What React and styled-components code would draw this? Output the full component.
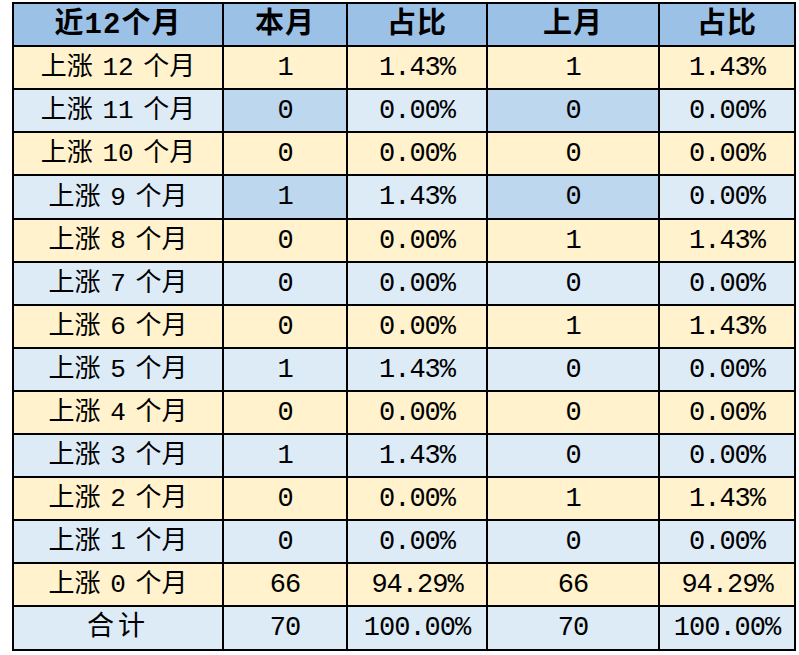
import React from "react";
import styled, { createGlobalStyle } from "styled-components";

const Global = createGlobalStyle`
  html, body { margin: 0; padding: 0; background: #ffffff; }
  body { padding: 2px 0 0 12px; }
`;

const Grid = styled.div`
  display: grid;
  grid-template-columns: 210px 124px 140px 172px 136px;
  width: max-content;
  border-top: 2px solid #000;
  border-left: 2px solid #000;
  font-family: "Liberation Mono", "Noto Sans CJK SC", monospace;
  color: #000;
`;

const BG = {
  head: "#9BC2E6",
  yellow: "#FFF2CC",
  blue: "#DDEBF7",
  mark: "#BDD7EE",
};

const Cell = styled.div`
  box-sizing: border-box;
  height: ${(p) => p.$h}px;
  border-right: 2px solid #000;
  border-bottom: 2px solid #000;
  background: ${(p) => BG[p.$bg]};
  display: flex;
  align-items: center;
  justify-content: center;
  white-space: pre;
  font-size: 27px;
  letter-spacing: -1px;
  line-height: 1;
  padding-top: 1px;
`;

const LabelCell = styled(Cell)`
  font-size: 26px;
  letter-spacing: 0;
  word-spacing: -6px;
`;

const TotalCell = styled(Cell)`
  font-size: 27px;
  letter-spacing: 4px;
`;

const HeadCell = styled(Cell)`
  font-size: 29px;
  font-weight: 700;
  letter-spacing: 1px;
`;

const rows = [
  ["上涨 12 个月", "1", "1.43%", "1", "1.43%"],
  ["上涨 11 个月", "0", "0.00%", "0", "0.00%", true],
  ["上涨 10 个月", "0", "0.00%", "0", "0.00%"],
  ["上涨 9 个月", "1", "1.43%", "0", "0.00%", true],
  ["上涨 8 个月", "0", "0.00%", "1", "1.43%"],
  ["上涨 7 个月", "0", "0.00%", "0", "0.00%"],
  ["上涨 6 个月", "0", "0.00%", "1", "1.43%"],
  ["上涨 5 个月", "1", "1.43%", "0", "0.00%"],
  ["上涨 4 个月", "0", "0.00%", "0", "0.00%"],
  ["上涨 3 个月", "1", "1.43%", "0", "0.00%"],
  ["上涨 2 个月", "0", "0.00%", "1", "1.43%"],
  ["上涨 1 个月", "0", "0.00%", "0", "0.00%"],
  ["上涨 0 个月", "66", "94.29%", "66", "94.29%"],
  ["合计", "70", "100.00%", "70", "100.00%"],
];

const heights = [43, 43, 43, 44, 43, 43, 43, 43, 43, 43, 43, 43, 43, 44];

const headers = ["近12个月", "本月", "占比", "上月", "占比"];

export default function App() {
  return (
    <>
      <Global />
      <Grid>
        {headers.map((h, i) => (
          <HeadCell key={"h" + i} $h={43} $bg="head">
            {h}
          </HeadCell>
        ))}
        {rows.map((r, ri) => {
          const base = ri % 2 === 0 ? "yellow" : "blue";
          const mark = r[5];
          const isTotal = ri === rows.length - 1;
          return r.slice(0, 5).map((v, ci) => {
            const bg = mark && (ci === 1 || ci === 3) ? "mark" : base;
            const key = ri + "-" + ci;
            if (ci === 0 && isTotal)
              return (
                <TotalCell key={key} $h={heights[ri]} $bg={bg}>
                  {v}
                </TotalCell>
              );
            if (ci === 0)
              return (
                <LabelCell key={key} $h={heights[ri]} $bg={bg}>
                  {v}
                </LabelCell>
              );
            return (
              <Cell key={key} $h={heights[ri]} $bg={bg}>
                {v}
              </Cell>
            );
          });
        })}
      </Grid>
    </>
  );
}
